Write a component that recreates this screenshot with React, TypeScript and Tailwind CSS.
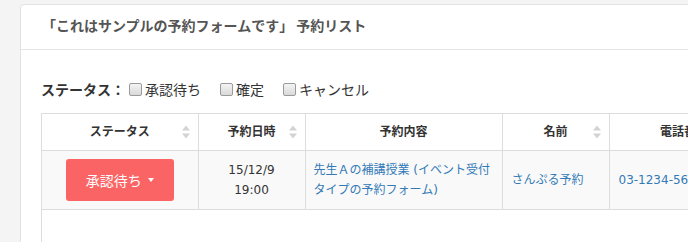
import React from "react";

const SortIcon = () => (
  <svg width="8" height="13" viewBox="0 0 8 13" className="absolute right-[8px] top-1/2 -translate-y-1/2">
    <path d="M4 0 L8 5 L0 5 Z" fill="#d3d3d3" />
    <path d="M0 8 L8 8 L4 13 Z" fill="#d3d3d3" />
  </svg>
);

const Check = ({ label }: { label: string }) => (
  <label className="flex items-center mr-[15px]">
    <span className="inline-block w-[13px] h-[13px] ml-[4px] mr-[3px] rounded-[2px] border border-[#9a9a9a] bg-gradient-to-b from-[#f4f4f4] to-[#d9d9d9]" />
    <span className="font-normal">{label}</span>
  </label>
);

export default function App() {
  const font = { fontFamily: '"DejaVu Sans", "Noto Sans CJK JP", sans-serif' };
  return (
    <div className="w-[688px] h-[242px] overflow-hidden bg-[#f4f4f4] pt-[4px] pl-[20px]" style={font}>
      <div className="w-[900px] h-[400px] bg-white border border-[#e2e2e2] rounded-[4px]">
        <div className="h-[45px] border-b border-[#e5e5e5] pl-[21px] flex items-center pb-[4px]">
          <span className="text-[14px] font-bold text-[#555]" style={{ fontFamily: '"Noto Sans CJK JP", sans-serif' }}>
            「これはサンプルの予約フォームです」 予約リスト
          </span>
        </div>
        <div className="pl-[20px] pt-[29px]">
          <div className="flex items-center h-[20px] text-[14px] text-[#333]" style={{ fontFamily: '"Noto Sans CJK JP", sans-serif' }}>
            <span className="font-bold">ステータス：</span>
            <Check label="承認待ち" />
            <Check label="確定" />
            <Check label="キャンセル" />
          </div>
          <div className="mt-[14px] border-l border-[#ddd] h-[200px]">
            <table className="border-collapse text-[12px] text-[#333] table-fixed" style={font}>
              <colgroup>
                <col className="w-[156px]" />
                <col className="w-[107px]" />
                <col className="w-[197px]" />
                <col className="w-[107px]" />
                <col className="w-[150px]" />
              </colgroup>
              <thead>
                <tr className="h-[37px]">
                  <th className="relative border-t border-r border-b border-[#ddd] font-bold text-center leading-[20px] px-[8px]">ステータス<SortIcon /></th>
                  <th className="relative border border-[#ddd] font-bold text-center leading-[20px] px-[8px]">予約日時<SortIcon /></th>
                  <th className="relative border border-[#ddd] font-bold text-center leading-[20px] px-[8px]">予約内容</th>
                  <th className="relative border border-[#ddd] font-bold text-center leading-[20px] px-[8px]">名前<SortIcon /></th>
                  <th className="relative border border-[#ddd] font-bold text-center leading-[20px] px-[8px]">電話番号</th>
                </tr>
              </thead>
              <tbody>
                <tr className="bg-[#f9f9f9]">
                  <td className="border-r border-b border-[#ddd] p-[8px] align-middle">
                    <div className="flex justify-center">
                      <button className="h-[42px] w-[108px] rounded-[3px] bg-[#fb6464] text-white text-[14px] flex items-center justify-center" style={{ fontFamily: '"Noto Sans CJK JP", sans-serif' }}>
                        承認待ち
                        <span className="inline-block ml-[6px] w-0 h-0 border-l-[3px] border-r-[3px] border-t-[4px] border-l-transparent border-r-transparent border-t-white" />
                      </button>
                    </div>
                  </td>
                  <td className="border border-[#ddd] px-[8px] align-middle text-center leading-[20px]">15/12/9<br />19:00</td>
                  <td className="border border-[#ddd] px-[8px] align-middle leading-[20px] text-[#337ab7]">先生Ａの補講授業 (イベント受付タイプの予約フォーム)</td>
                  <td className="border border-[#ddd] px-[9px] align-middle leading-[20px] text-[#337ab7]">さんぷる予約</td>
                  <td className="border border-[#ddd] px-[9px] align-middle leading-[20px] text-[#337ab7] whitespace-nowrap">03-1234-5678</td>
                </tr>
              </tbody>
            </table>
          </div>
        </div>
      </div>
    </div>
  );
}
